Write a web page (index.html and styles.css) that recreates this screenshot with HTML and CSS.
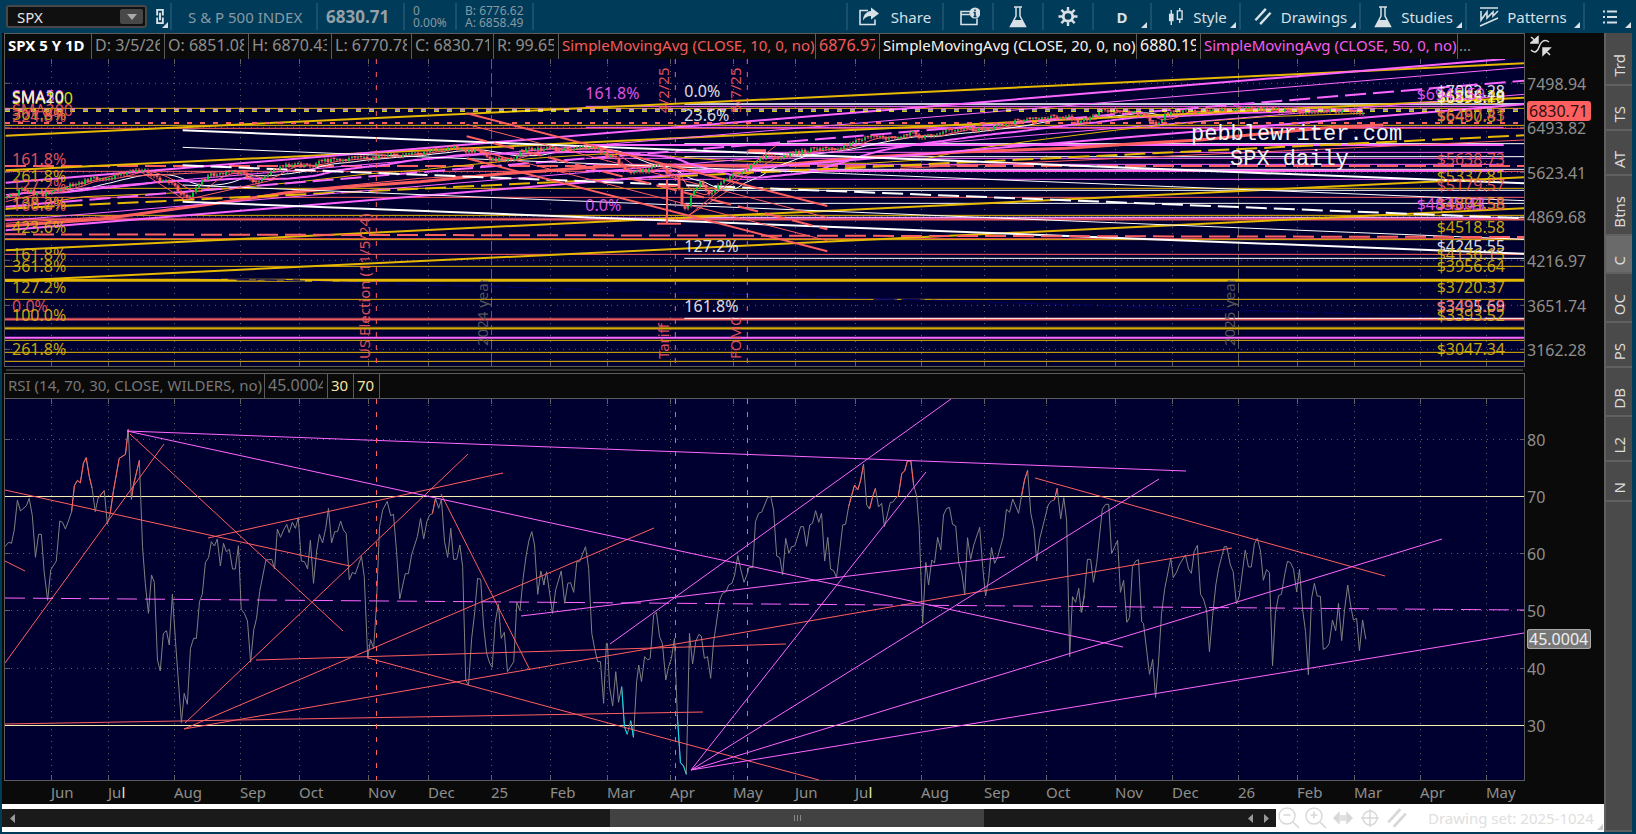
FILE: index.html
```
<!DOCTYPE html>
<html lang="en">
<head>
<meta charset="utf-8">
<title>SPX - Charts</title>
<link rel="stylesheet" href="styles.css">
</head>
<body>
<svg class="defs" aria-hidden="true">
  <symbol id="i-flask" viewBox="0 0 20 24"><path d="M6 2h8M8 2v9L2.500 21.500h15L12 11V2" fill="none" stroke="currentColor" stroke-width="1.500"/><path d="M6 15h8l4 7H2z" fill="currentColor"/></symbol>
  <symbol id="i-lines" viewBox="0 0 20 20"><path d="M2 14 13 2M7 18 18 6" fill="none" stroke="currentColor" stroke-width="2.500"/></symbol>
</svg>
<header class="toolbar">
  <div class="symbol">
    <div class="combo"><input aria-label="Symbol" value="SPX"><button aria-label="Symbol list"><svg viewBox="0 0 10 6"><path d="M0 0h10L5 6z" fill="#aaa"/></svg></button></div>
    <button class="link-btn corner" aria-label="Link"><svg viewBox="0 0 10 18"><path d="M2 8V2h6v6M2 10v6h6v-6M5 5v8" fill="none" stroke="#dce4ea" stroke-width="2"/></svg></button>
  </div>
  <div class="name">S &amp; P 500 INDEX</div>
  <div class="last">6830.71</div>
  <div class="small change">0<br>0.00%</div>
  <div class="small quote">B: 6776.62<br>A: 6858.49</div>
  <div class="spacer"></div>
  <button class="tool share"><svg viewBox="0 0 20 18"><path d="M9 3H1v14h15v-5" fill="none" stroke="currentColor" stroke-width="1.600"/><path d="M12 0l8 6-8 6V8.500C8 8.500 6 10 4 13c0-5 3-9 8-9.500z" fill="currentColor"/></svg>Share</button>
  <button class="tool info" aria-label="Chart info"><svg viewBox="0 0 20 18"><path d="M10 4H1v13h16v-6M1 7h9" fill="none" stroke="currentColor" stroke-width="1.600"/><circle cx="15" cy="5.500" r="5.500" fill="currentColor"/><path d="M13.500 5H15v4m-1.500 0h3M15 2v1.500" stroke="#003b59" stroke-width="1.500" fill="none"/></svg></button>
  <button class="tool lab" aria-label="Lab"><svg viewBox="0 0 20 24"><use href="#i-flask"/></svg></button>
  <button class="tool gear" aria-label="Settings"><svg viewBox="0 0 20 20"><circle cx="10" cy="10" r="5" fill="none" stroke="currentColor" stroke-width="3"/><path d="M10 0v4M10 16v4M0 10h4M16 10h4M3 3l3 3M14 14l3 3M17 3l-3 3M3 17l3-3" stroke="currentColor" stroke-width="2.500"/></svg></button>
  <button class="tool period corner"><b>D</b></button>
  <button class="tool style corner"><svg viewBox="0 0 16 20"><path d="M3.500 3v16M12.500 1v3M12.500 13v4" stroke="currentColor" stroke-width="1.500"/><path d="M1 7h5v8H1z" fill="currentColor"/><path d="M10 4h5v9h-5z" fill="none" stroke="currentColor" stroke-width="1.500"/></svg>Style</button>
  <button class="tool drawings corner"><svg viewBox="0 0 20 20"><use href="#i-lines"/></svg>Drawings</button>
  <button class="tool studies corner"><svg viewBox="0 0 20 24"><use href="#i-flask"/></svg>Studies</button>
  <button class="tool patterns corner"><svg viewBox="0 0 20 20"><path d="M1 1h18M1 19 19 11M2 4v9l6-8v6l6-6v4l5-5" fill="none" stroke="currentColor" stroke-width="1.600"/></svg>Patterns</button>
  <button class="tool menu corner" aria-label="Menu"><svg viewBox="0 0 14 14"><path d="M0 1.500h2M0 7h2M0 12.500h2M4 1.500h10M4 7h10M4 12.500h10" stroke="currentColor" stroke-width="2"/></svg></button>
</header>
<div class="workspace">
  <main class="charts">
    <div class="row head">
      <div class="cells">
        <div class="cell title">SPX 5 Y 1D</div>
        <div class="cell c-date"><span>D: 3/5/26</span></div>
        <div class="cell c-open"><span>O: 6851.08</span></div>
        <div class="cell c-high"><span>H: 6870.43</span></div>
        <div class="cell c-low"><span>L: 6770.78</span></div>
        <div class="cell c-close"><span>C: 6830.71</span></div>
        <div class="cell c-range"><span>R: 99.65</span></div>
        <div class="cell c-sma red">SimpleMovingAvg (CLOSE, 10, 0, no)</div>
        <div class="cell c-val red"><span>6876.97</span></div>
        <div class="cell c-sma white">SimpleMovingAvg (CLOSE, 20, 0, no)</div>
        <div class="cell c-val white"><span>6880.19</span></div>
        <div class="cell c-sma pink">SimpleMovingAvg (CLOSE, 50, 0, no)</div>
        <div class="cell c-rest">...</div>
      </div>
      <div class="corner-icon"><svg viewBox="0 0 22 22"><path d="M1 2l6 5M8 2v6H1zM1 15c4 4 7 1 8-3s5-9 10-5M20 20l-5-5M13 13v7l7-7z" fill="none" stroke="#ddd" stroke-width="1.500"/><path d="M8 1v7H1zM13 13h7l-7 7z" fill="#ddd"/></svg></div>
    </div>
    <div class="row price">
      <div class="plot" id="pricePlot"><svg viewBox="15 27 4557 921" preserveAspectRatio="none" id="priceSvg"></svg></div>
      <div class="axis" id="priceAxis"></div>
    </div>
    <div class="splitter"></div>
    <div class="row head rsi-head">
      <div class="cells">
        <div class="cell c-rsi">RSI (14, 70, 30, CLOSE, WILDERS, no)</div>
        <div class="cell c-rsival"><span>45.0004</span></div>
        <div class="cell c-lim">30</div>
        <div class="cell c-lim">70</div>
      </div>
      <div></div>
    </div>
    <div class="row rsi">
      <div class="plot" id="rsiPlot"><svg viewBox="5 399 1519 381" preserveAspectRatio="none" id="rsiSvg"></svg></div>
      <div class="axis" id="rsiAxis"></div>
    </div>
    <div class="row dates"><div class="date-axis" id="dateAxis"></div><div></div></div>
    <footer class="bottom">
      <div class="scroll">
        <button class="arrow" aria-label="Scroll left"><svg viewBox="0 0 5 9"><path d="M5 0v9L0 4.500z" fill="#999"/></svg></button>
        <div class="track"><div class="thumb"><i></i><i></i><i></i></div></div>
        <button class="arrow" aria-label="Step left"><svg viewBox="0 0 5 9"><path d="M5 0v9L0 4.500z" fill="#999"/></svg></button>
        <button class="arrow" aria-label="Step right"><svg viewBox="0 0 5 9"><path d="M0 0v9l5-4.500z" fill="#999"/></svg></button>
      </div>
      <div class="zoom-tools">
        <button aria-label="Zoom out"><svg viewBox="0 0 22 22"><circle cx="9" cy="9" r="8"/><path d="M5.500 8h7M15 15l6 6"/></svg></button>
        <button aria-label="Zoom in"><svg viewBox="0 0 22 22"><circle cx="9" cy="9" r="8"/><path d="M5.500 8h7M9 4.500v7M15 15l6 6"/></svg></button>
        <button aria-label="Fit"><svg viewBox="0 0 22 22"><path d="M9 8v6M11 8v6M13 8v6"/><path d="M7 6v10L2 11zM15 6v10l5-5z" fill="#d8d8d8"/></svg></button>
        <button aria-label="Crosshair"><svg viewBox="0 0 22 22"><circle cx="11" cy="11" r="7"/><path d="M11 2v18M2 11h18"/></svg></button>
        <button aria-label="Drawing tool"><svg viewBox="0 0 20 20"><use href="#i-lines"/></svg></button>
      </div>
      <button class="set corner">Drawing set: 2025-1024</button>
    </footer>
  </main>
  <nav class="tabs">
    <button class="t52"><span>Trd</span></button><button class="t45"><span>TS</span></button><button class="t45"><span>AT</span></button><button class="t60"><span>Btns</span></button><button class="t38 on"><span>C</span></button><button class="t49"><span>OC</span></button><button class="t45"><span>PS</span></button><button class="t49"><span>DB</span></button><button class="t45"><span>L2</span></button><button class="t40"><span>N</span></button>
  </nav>
</div>
<script src="charts.js"></script>
</body>
</html>
```
FILE: styles.css
```
* { box-sizing: border-box; }
body {
  margin: 0; height: 100vh; min-height: 600px; display: flex; flex-direction: column;
  background: #003b59; color: #8e8e8e; font: 16px/20px "Noto Sans", sans-serif; overflow: hidden;
}
button, input { font: inherit; color: inherit; background: none; border: 0; padding: 0; margin: 0; }
.defs { position: absolute; width: 0; height: 0; }
.toolbar { flex: none; height: 33px; padding: 3px 2px 3px 6px; display: flex; color: #d8e0e6; white-space: nowrap; }
.toolbar > * { border-right: 2px solid #1a4f6d; display: flex; align-items: center; }
.toolbar > .menu { border-right: 0; }
.symbol { width: 166px; gap: 8px; }
.combo { width: 141px; height: 23px; display: flex; align-items: center; background: #101010; border: 2px solid #484848; border-radius: 3px; padding-right: 2px; }
.combo input { flex: 1; min-width: 0; padding-left: 9px; color: #e4e4e4; font-size: 15px; }
.combo button { width: 23px; height: 15px; background: #484848; border-radius: 2px; display: grid; place-items: center; }
.combo svg { width: 10px; height: 6px; }
.link-btn { width: 13px; height: 100%; display: flex; align-items: center; }
.link-btn svg { width: 10px; height: 17px; }
.corner { position: relative; }
.corner::after { content: ""; position: absolute; right: 3px; bottom: 2px; border: 3px solid transparent; border-right-color: #d8e0e6; border-bottom-color: #d8e0e6; }
.link-btn.corner::after { right: 0; }
.name { width: 146px; padding-left: 16px; color: #8799a4; font-size: 15px; }
.last { width: 87px; padding-left: 8px; font-weight: bold; font-size: 17px; color: #96a0a7; }
.toolbar > .small { font-size: 12px; line-height: 12px; color: #8799a4; padding-left: 8px; }
.change { width: 52px; }
.quote { width: 77px; }
.toolbar > .spacer { flex: 1; }
.tool { justify-content: center; gap: 8px; font-size: 15px; }
.tool svg { width: 20px; height: 19px; }
.share { width: 96px; gap: 12px; }
.info { width: 50px; }
.info svg { margin-left: 4px; }
.lab { width: 50px; }
.gear { width: 50px; }
.period { width: 58px; }
.style { width: 89px; padding-left: 4px; gap: 10px; }
.style svg { width: 15px; }
.drawings { width: 120px; }
.studies { width: 106px; }
.lab svg, .studies svg { height: 24px; }
.patterns { width: 118px; padding-right: 4px; }
.patterns svg { height: 20px; }
.menu { width: 49px; }
.menu svg { width: 14px; height: 14px; }

.workspace { flex: 1; min-height: 0; display: flex; padding: 0 4px 2px 2px; }
.charts { flex: 1; min-width: 0; display: flex; flex-direction: column; background: #0a0a0a; }
.row { display: grid; grid-template-columns: minmax(0, 1fr) 79px; padding-left: 2px; }
.head { flex: none; height: 26px; }
.cells { display: flex; border: 1px solid #5c5c5c; overflow: hidden; white-space: nowrap; font-size: 15px; }
.cell { flex: none; border-right: 1px solid #5c5c5c; padding: 0 4px 0 3px; line-height: 22px; overflow: hidden; }
.cell span { display: block; overflow: hidden; font-size: 16px; }
.title { width: 87px; font-weight: bold; color: #fff; }
.c-date { width: 73px; }
.c-open { width: 84px; }
.c-high { width: 83px; }
.c-low { width: 80px; }
.c-close { width: 82px; }
.c-range { width: 65px; }
.c-sma { width: 257px; padding-right: 0; }
.c-val { width: 64px; }
.c-rest { border: 0; padding-left: 1px; }
.c-rsi { width: 260px; color: #777; }
.c-rsival { width: 63px; color: #777; }
.c-lim { width: 26px; color: #f5e6a0; }
.red { color: #f45a5d; }
.white { color: #f4f4f4; }
.pink { color: #f45cf0; }
.yellow { color: #dcb60a; }
.lemon { color: #f0f000; }
.gray { color: #5f5f5f; }
.corner-icon { padding: 2px 0 0 5px; }
.corner-icon svg { width: 22px; height: 22px; }
.price { flex: 308; min-height: 0; }
.rsi { flex: 382; min-height: 0; }
.plot { position: relative; background: #000030; border: solid #5c5c5c; border-width: 0 1px 1px; overflow: hidden; }
.plot svg { position: absolute; width: 100%; height: 100%; display: block; }
.plot path { fill: none; vector-effect: non-scaling-stroke; }
.label { position: absolute; line-height: 18px; font-size: 16px; white-space: nowrap; transform: translateY(-50%); opacity: .9; }
.label.end { transform: translate(-100%, -50%); }
.label.up { writing-mode: vertical-rl; transform: translate(-50%, -100%) rotate(180deg); font-size: 15px; }
.label.up.gray { max-height: 66px; overflow: hidden; }
.label.mono { font: 22px/22px "Liberation Mono", monospace; opacity: 1; }
.axis { position: relative; border-bottom: 1px solid transparent; }
.axis span { position: absolute; left: 2px; transform: translateY(-50%); line-height: 20px; }
.axis .mark { border-radius: 3px; background: #ff5f5f; color: #301010; padding: 0 3px 0 2px; }
.axis .mark.rsi-mark { background: #777; color: #eee; box-shadow: inset 0 0 0 1px #aaa; }
.splitter { flex: none; height: 6px; padding: 2px 81px 0 4px; }
.splitter::before { content: ""; display: block; height: 2px; background: #333; }
.dates { flex: none; height: 23px; }
.date-axis { position: relative; }
.date-axis span { position: absolute; top: 0; font-size: 15px; line-height: 22px; }
.date-axis b { font-weight: normal; color: #f2f0b0; }
.bottom { flex: none; height: 28px; background: #fff; display: flex; align-items: center; gap: 2px; color: #d8d8d8; }
.scroll { flex: 1; height: 18px; background: #1a1a1a; display: flex; align-items: center; padding: 0 2px; }
.arrow { width: 16px; height: 18px; display: grid; place-items: center; }
.arrow svg { width: 5px; height: 9px; }
.track { flex: 1; height: 18px; margin-right: 2px; }
.thumb { width: 30.6%; height: 18px; margin-left: 48.4%; background: #424242; display: flex; justify-content: center; align-items: center; gap: 2px; }
.thumb i { width: 1px; height: 6px; background: #888; }
.zoom-tools { display: flex; gap: 5px; }
.zoom-tools button { width: 22px; height: 22px; }
.zoom-tools svg { width: 22px; height: 22px; fill: none; stroke: #d8d8d8; stroke-width: 1.5; }
.set { font-size: 15px; width: 194px; text-align: left; padding-left: 18px; height: 24px; color: #e0e0e0; white-space: nowrap; }
.set.corner::after { right: 1px; bottom: 0; border-right-color: #ccc; border-bottom-color: #ccc; }
.tabs { flex: none; width: 28px; background: #4a4a4a; border-left: 2px solid #606060; display: flex; flex-direction: column; border-bottom: 2px solid #606060; }
.tabs button { flex: none; border-bottom: 2px solid #606060; color: #dcdcdc; display: grid; place-items: center; font-size: 15px; padding-top: 14px; }
.tabs span { writing-mode: vertical-rl; transform: rotate(180deg); }
.tabs .on { background: #6a6a6a; }
.t52 { height: 53px; }
.t45 { height: 45px; }
.t60 { height: 60px; }
.t38 { height: 38px; }
.t49 { height: 49px; }
.t40 { height: 40px; }
```
FILE: charts.js
```
const NS = 'http://www.w3.org/2000/svg';
const C = { y: '#e6b800', r: '#ff5f5f', p: '#ff66ff', w: '#ffffff', l: '#ffff00', g: '#606060', n: '#000068', dr: '#9c3f4c', dy: '#8a7010' };
const priceSvg = document.getElementById('priceSvg');
const rsiSvg = document.getElementById('rsiSvg');

function path(svg, d, color, width, dash, transform) {
  const el = document.createElementNS(NS, 'path');
  el.setAttribute('d', d);
  el.setAttribute('stroke', C[color] || color);
  el.setAttribute('stroke-width', width || 1);
  if (dash) el.setAttribute('stroke-dasharray', dash);
  if (transform) el.setAttribute('transform', transform);
  svg.appendChild(el);
}
const seg = (svg, x1, y1, x2, y2, c, w, dash) => path(svg, `M${x1} ${y1}L${x2} ${y2}`, c, w, dash);

/* ---- grid ---- */
const months = [[51, 'Jun'], [108, 'Jul'], [174, 'Aug'], [240, 'Sep'], [299, 'Oct'], [368, 'Nov'], [428, 'Dec'], [491, '25'], [550, 'Feb'], [607, 'Mar'], [670, 'Apr'], [733, 'May'], [795, 'Jun'], [855, 'Jul'], [921, 'Aug'], [984, 'Sep'], [1046, 'Oct'], [1115, 'Nov'], [1172, 'Dec'], [1238, '26'], [1297, 'Feb'], [1354, 'Mar'], [1420, 'Apr'], [1486, 'May']];
for (const [x] of months) {
  const px = (x + 0.5) * 3;
  const year = x === 491 || x === 1238;
  seg(priceSvg, px, 27, px, 948, 'g', 1, year ? '10 4' : '1 5');
  seg(priceSvg, px, 27, px, 42, 'g', 1);
  seg(priceSvg, px, 933, px, 948, 'g', 1);
  seg(rsiSvg, x + 0.5, 399, x + 0.5, 780, 'g', 1, '1 5');
  seg(rsiSvg, x + 0.5, 399, x + 0.5, 404, 'g', 1);
  seg(rsiSvg, x + 0.5, 775, x + 0.5, 780, 'g', 1);
}
for (const y of [100, 232, 367, 499, 631, 766, 898]) {
  seg(priceSvg, 15, y, 4572, y, 'g', 1, '1 5');
  seg(priceSvg, 15, y, 30, y, 'g', 1);
  seg(priceSvg, 4560, y, 4572, y, 'g', 1);
}
for (const y of [439.5, 553.5, 610.5, 668.5]) {
  seg(rsiSvg, 5, y, 1524, y, 'g', 1, '1 5');
  seg(rsiSvg, 5, y, 10, y, 'g', 1);
  seg(rsiSvg, 1520, y, 1524, y, 'g', 1);
}

/* ---- price series ---- */
const close = [[17,440],[50,430],[60,412],[110,432],[150,432],[190,412],[240,400],[270,388],[340,382],[400,362],[430,360],[450,375],[480,390],[520,400],[545,440],[570,440],[600,400],[630,375],[700,365],[735,375],[755,400],[790,385],[830,355],[880,342],[930,350],[980,330],[1040,328],[1090,320],[1110,325],[1140,318],[1180,312],[1210,318],[1260,310],[1310,300],[1360,292],[1400,305],[1430,300],[1470,325],[1530,332],[1580,295],[1630,298],[1680,300],[1720,297],[1780,292],[1810,310],[1850,330],[1890,375],[1940,360],[1980,345],[2000,365],[2030,385],[2045,460],[2060,480],[2080,420],[2100,400],[2130,440],[2160,395],[2190,380],[2220,370],[2270,330],[2310,310],[2340,325],[2380,310],[2440,300],[2500,300],[2550,280],[2600,265],[2680,262],[2740,250],[2770,265],[2820,248],[2880,238],[2950,240],[3000,228],[3040,215],[3080,205],[3130,205],[3200,198],[3230,215],[3280,200],[3310,182],[3360,185],[3400,190],[3440,205],[3470,222],[3500,190],[3560,185],[3660,182],[3720,180],[3800,178],[3900,185],[3980,182],[4040,182],[4080,190],[4095,185]];
const bars = [];
for (let x = 21, k = 0, seed = 7; x < 4095; x += 9) {
  while (close[k + 1][0] < x) k++;
  const [x0, y0] = close[k], [x1, y1] = close[k + 1];
  seed = (seed * 1103515245 + 12345) % 2147483648;
  bars.push({ x: Math.round(x / 3) * 3, y: y0 + (y1 - y0) * (x - x0) / (x1 - x0) + (seed / 2147483648 - 0.5) * 12 });
}
const average = n => 'M' + bars.map((b, i) => {
  const part = bars.slice(Math.max(0, i - n), i + 1);
  return b.x + ' ' + (part.reduce((s, p) => s + p.y, 0) / part.length).toFixed(1);
}).join('L');

function drawBars() {
  let up = '', down = '', wick = '';
  bars.forEach((b, i) => {
    const prev = i ? bars[i - 1].y : b.y + 4;
    const body = `M${b.x} ${prev}V${Math.abs(prev - b.y) < 4 ? prev - 4 : b.y}`;
    if (b.y < prev) up += body; else down += body;
    wick += `M${b.x} ${Math.min(prev, b.y) - 5}V${Math.max(prev, b.y) + 5}`;
  });
  path(priceSvg, wick, 'r', 1);
  path(priceSvg, down, 'r', 3);
  path(priceSvg, up, '#00c83c', 2);
}

/* ---- horizontal levels ---- */
const L = 15, R = 4572;
seg(priceSvg, L, 508, R, 508, 'dr', 3);
seg(priceSvg, L, 808, R, 808, 'dr', 3);
seg(priceSvg, L, 835, R, 835, 'dy', 3);
for (const [y, c, w, dash] of [[175,'y'],[226,'y'],[235,'r'],[364,'r'],[415,'y'],[442,'r'],[496,'y'],[508,'r'],[566,'r'],[569,'y'],[613,'r'],[649,'y'],[691,'y',3],[748,'y'],[808,'r'],[835,'y'],[863,'p',2],[871,'y'],[907,'y'],[934,'y'],[348,'r',2,'21 7']]) seg(priceSvg, L, y, R, y, c, w, dash);
for (const y of [281, 320, 358, 421, 460, 502, 625, 805]) seg(priceSvg, 2053, y, R, y, 'w');
seg(priceSvg, 2053, 162, R, 162, '#c8c8dc', 2);
for (const [y, w] of [[169,1],[232,1],[285,2],[307,1],[325,1],[343,1],[362,2],[388,1],[504,1]]) seg(priceSvg, 1757, y, 4511, y, 'p', w);

/* ---- averages and trend lines ---- */
path(priceSvg, 'M17 478L250 440L500 430L700 415L900 395L1100 372L1260 360L1400 345L1600 325L1800 312L2000 318L2150 330L2350 338L2600 340L2760 330L2900 300L3100 272L3350 240L3600 215L3800 200L4095 190', 'y');
path(priceSvg, 'M17 528L300 508L650 460L850 430L1050 410L1260 395L1500 372L1800 350L2000 345L2300 350L2400 340L2600 322L2900 305L3200 295L3450 278L3600 270L3800 250L4000 232L4150 225', 'r', 3);
path(priceSvg, 'M17 520L400 494L900 420L1260 385L1700 362', 'r', 1);
path(priceSvg, average(18), 'w', 1);
path(priceSvg, average(46), 'p', 2);
path(priceSvg, average(8), 'r', 1);
const trends = [
  [17,257,R,40,'y',2],[17,361,R,143,'y',2],[17,476,R,256,'y',2,'21 7'],[17,601,R,382,'y',2],[17,693,R,475,'y',2],
  [17,398,4515,27,'p',2],[17,434,R,52,'p',1],[17,470,R,92,'p',2,'21 7'],[17,512,R,133,'p',1],[17,541,R,163,'p',2],
  [548,241,R,400,'w',2],[548,292,R,452,'w',1],[548,346,R,505,'w',2,'21 7'],[548,405,R,568,'w',1],[548,455,R,611,'w',2],
  [15,553,R,561,'r',2,'21 7'],[2700,355,R,270,'r',1],
  [1400,190,2482,468,'r',2],[1400,223,2482,503,'r',1],[1400,259,2482,538,'r',2,'21 7'],[1400,293,2482,572,'r',1],[1400,325,2482,604,'r',2],
  [2065,497,2330,285,'r',1],[2065,497,2180,425,'r',1],[430,370,555,450,'r',1],[555,450,840,385,'r',1],[17,455,370,370,'r',1],[370,380,760,360,'r',1],
  [2001,390,2001,521,'r',2],[1971,521,2043,521,'r',2],[1971,408,2030,408,'r',2],[2245,302,2298,302,'r',3],
  [600,684,2460,740,'n',1,'21 7'],[2460,740,4460,804,'n',1,'21 7'],[2620,748,2760,748,'n',1,'21 7'],[710,690,900,690,'n',1,'21 7']
];
trends.forEach(t => seg(priceSvg, ...t));
drawBars();
seg(priceSvg, L, 219, R, 219, 'r', 2, '5 8');
seg(priceSvg, L, 177, R, 177, 'p', 1, '5 8');
seg(priceSvg, L, 180, R, 180, 'w', 1, '5 8');
seg(priceSvg, L, 184, R, 184, 'l', 1, '5 8');
for (const x of [1129, 2026, 2242]) seg(priceSvg, x, 27, x, 948, 'r', 1, '5 8');

/* ---- labels on the price plot ---- */
const pricePlot = document.getElementById('pricePlot');
function label(text, x, y, cls) {
  const el = document.createElement('span');
  el.className = 'label ' + cls;
  el.textContent = text;
  el.style.left = (x - 15) / 45.57 + '%';
  el.style.top = (y - 30) / 9.21 + '%';
  pricePlot.appendChild(el);
}
[['SMA50',140,'pink'],['SMA100',148,'lemon'],['SMA20',145,'white'],['361.8%',196,'yellow'],['SMA200',182,'red'],['224.8%',200,'red'],['161.8%',330,'red'],['261.8%',382,'yellow'],['127.2%',408,'red'],['138.2%',463,'yellow'],['100.0%',467,'red'],['423.6%',534,'yellow'],['161.8%',616,'yellow'],['361.8%',650,'yellow'],['127.2%',714,'yellow'],['0.0%',770,'red'],['100.0%',797,'yellow'],['261.8%',900,'yellow']].forEach(([t, y, c]) => label(t, 36, y, c));
[['$6925.20',147,'yellow'],['$6882.28',142,'lemon'],['$7002.28',125,'white'],['$6895.19',145,'white'],['$6490.81',202,'yellow'],['$6487.43',198,'red'],['$5638.73',330,'red'],['$5337.81',380,'yellow'],['$5179.57',408,'red'],['$4894.58',461,'yellow'],['$4803.58',466,'red'],['$4518.58',534,'yellow'],['$4245.55',590,'white'],['$4136.15',616,'yellow'],['$3956.64',650,'yellow'],['$3720.37',714,'yellow'],['$3495.69',770,'white'],['$3491.58',770,'red'],['$3393.52',797,'yellow'],['$3047.34',900,'yellow']].forEach(([t, y, c]) => label(t, 4515, y, 'end ' + c));
label('$6945.59', 4250, 134, 'pink');
label('$4835.43', 4250, 466, 'pink');
label('161.8%', 1756, 133, 'pink');
label('0.0%', 1756, 467, 'pink');
[['0.0%',125],['23.6%',197],['127.2%',590],['161.8%',770]].forEach(([t, y]) => label(t, 2053, y, 'white'));
[['US Election (11/5/24)',1092,930,'red'],['2024 year',1446,890,'gray'],['4/2/25',1989,192,'red'],['Tariff',1989,930,'red'],['5/7/25',2205,192,'red'],['FOMC',2205,930,'red'],['2025 year',3687,890,'gray']].forEach(([t, x, y, c]) => label(t, x, y, 'up ' + c));
label('pebblewriter.com', 3573, 258, 'mono white');
label('SPX daily', 3690, 333, 'mono white');

/* ---- RSI plot ---- */
seg(rsiSvg, 5, 496.5, 1524, 496.5, '#f5f0b0');
seg(rsiSvg, 5, 725.5, 1524, 725.5, '#f5f0b0');
const part = [['translate(0 365) scale(.34758 .33333)', '14,545 25,532 33,535 41,495 50,406 59,438 76,422 84,400 93,452 102,577 111,508 119,508 127,620 137,706 146,615 162,588 172,468 180,472 188,492 197,468 206,440 214,362 223,346 231,354 240,295 248,278 257,335 265,370 274,440 282,400 291,388 300,377 309,478 317,445 326,380 343,280 361,268 369,193 378,403 384,360 401,286 410,545 418,655 427,745 436,630 444,652 453,885 461,918 470,805 479,797 487,840 496,688 505,830 522,1073 530,985 539,1018 548,850 557,820 565,820 574,710 582,688 591,592 600,578 608,530 617,543 625,522 634,603 643,535 651,560 660,553 669,612 677,612 686,542 694,733 703,745 712,768 721,892 730,795 738,760 747,680 765,585 782,583 790,612 798,492 807,517 816,495 825,478 832,503 841,472 850,490 858,458 867,588 876,590 885,612 893,526 902,655 911,558 919,508 928,534 937,490 945,430 954,534 963,500 971,500 980,468 988,495 996,505 1005,645 1014,622 1022,627 1040,574 1048,635 1058,880 1066,824 1075,850 1083,720 1092,485 1101,435 1114,409 1124,452 1132,448 1141,560 1150,702 1166,626 1175,626 1184,570 1201,514 1210,460 1219,522 1228,470 1236,450 1244,446 1253,400 1262,430 1270,403 1279,530 1288,577 1297,490 1305,583 1314,583 1323,540 1331,605 1340,945 1348,960 1357,820 1366,740 1374,640 1383,643 1391,780 1400,865 1409,895 1416,907 1425,770 1434,718 1442,820 1451,802 1460,920 1478,890 1487,712 1496,737 1505,640 1514,570 1522,525 1530,500 1538,540 1547,688 1556,618 1565,660 1567,640'],
  ['translate(540 365) scale(.34758 .33333)', '10,660 19,620 36,745 45,675 61,618 71,715 80,655 88,653 97,682 106,590 114,590 131,545 140,610 149,805 157,850 166,890 174,890 183,1015 191,835 194,835 200,965 209,1023 218,920 226,1012 235,965 243,1085 251,1108 261,1067 269,1117 278,950 284,900 292,950 301,875 310,885 317,880 327,750 335,742 344,815 352,835 362,945 370,905 378,880 387,820 395,1050 404,1193 413,1203 421,1228 430,805 439,897 448,830 457,808 464,813 473,880 482,875 491,940 499,835 517,705 525,685 535,680 543,660 552,655 560,630 569,572 578,615 587,652 597,625 601,607 612,608 620,470 629,445 638,441 655,397 664,395 672,435 681,573 690,578 698,630 707,520 716,565 724,545 733,543 750,485 758,485 767,544 776,480 784,475 793,437 802,472 810,445 819,588 828,517 836,612 845,617 853,638 862,560 871,480 879,478 888,425 897,390 905,360 914,375 922,348 931,298 940,420 948,432 957,395 965,370 974,426 983,415 991,485 1008,412 1015,412 1024,398 1031,393 1041,325 1049,318 1057,288 1067,288 1075,360 1084,395 1091,490 1101,775 1110,592 1118,660 1127,585 1135,594 1144,517 1153,555 1161,450 1170,430 1178,427 1187,478 1196,483 1205,595 1213,620 1222,690 1230,518 1239,583 1248,540 1265,487 1274,610 1282,693 1291,640 1299,548 1308,595 1317,575 1333,515 1342,433 1351,442 1360,402 1377,445 1385,395 1394,345 1403,316 1412,445 1421,490 1429,588 1438,520 1462,420 1471,408 1480,405 1488,370 1498,462 1507,398 1515,465 1524,875 1532,695 1541,712 1550,670 1557,742 1567,690'],
  ['translate(1080 365) scale(.35461 .33333)', '5,742 13,680 21,583 30,583 38,652 47,595 63,432 72,418 81,418 89,566 106,526 114,682 123,646 132,772 140,757 148,605 157,588 165,584 174,770 179,775 196,928 205,883 213,998 221,900 230,745 239,670 256,580 263,638 272,622 280,600 297,570 306,612 314,625 322,560 331,541 340,688 348,702 357,735 365,860 374,752 383,660 391,610 407,545 414,545 424,600 432,620 441,717 449,695 466,555 475,606 483,606 492,535 500,520 509,558 517,646 526,614 534,622 543,902 551,745 560,692 568,688 577,630 585,589 593,592 602,612 611,680 619,613 628,735 636,800 644,930 653,700 661,655 669,693 678,694 686,853 695,848 703,835 712,765 721,798 729,715 738,827 746,735 755,660 763,720 771,765 780,760 788,857 797,765 806,823']];
part.forEach(([t, pts]) => path(rsiSvg, 'M' + pts.replace(/ /g, 'L'), '#808080', 1, null, t));
path(rsiSvg, 'M206 440L214 362L223 346L231 354L240 295L248 278L257 335L265 370M282 400L291 388L300 377M317 445L326 380L343 280L361 268L369 193M378 403L384 360L401 286M1244 446L1253 400', 'r', 1, null, part[0][0]);
path(rsiSvg, 'M888 425L897 390L905 360L914 375L922 348L931 298M948 432L957 395L965 370M1024 398L1031 393L1041 325L1049 318L1057 288L1067 288L1075 360M1385 395L1394 345L1403 316M1480 405L1488 370', 'r', 1, null, part[1][0]);
path(rsiSvg, 'M235 965L243 1085L251 1108M261 1067L269 1117M395 1050L404 1193L413 1203L421 1228', '#00e0f0', 1, null, part[1][0]);
[[5,490,350,566,'r'],[5,561,25,571,'r'],[5,663,164,444,'r'],[130,434,343,631,'r'],[208,538,503,473,'r'],[185,723,468,454,'r'],[184,729,654,528,'r'],[184,729,1232,548,'r'],[256,660,786,644,'r'],[368,658,819,780,'r'],[5,724,703,712,'r'],[441,494,530,670,'r'],[1035,478,1385,576,'r'],
 [127,431,1186,471,'p'],[127,431,1123,647,'p'],[5,598,1524,610,'p',1,'20 8'],[521,616,1005,557,'p'],[610,644,951,399,'p'],[691,770,926,472,'p'],[691,770,1159,479,'p'],[691,770,1442,539,'p'],[691,770,1524,633,'p'],
 [376.5,399,376.5,780,'r',1,'5 8'],[675.5,399,675.5,780,'r',1,'5 8'],[747.5,399,747.5,780,'r',1,'5 8']].forEach(t => seg(rsiSvg, ...t));

/* ---- axes ---- */
function tick(axis, text, pct, cls) {
  const el = document.createElement('span');
  el.textContent = text;
  el.style.top = pct + '%';
  if (cls) el.className = cls;
  axis.appendChild(el);
}
const priceAxis = document.getElementById('priceAxis');
[['7498.94',104],['6493.82',236],['5623.41',371],['4869.68',503],['4216.97',635],['3651.74',770],['3162.28',902]].forEach(([t, y]) => tick(priceAxis, t, (y - 30) / 9.21));
tick(priceAxis, '6830.71', (184 - 27) / 9.21, 'mark');
const rsiAxis = document.getElementById('rsiAxis');
[['80',440],['70',497],['60',554],['50',611],['40',669],['30',726]].forEach(([t, y]) => tick(rsiAxis, t, (y - 399) / 3.81));
tick(rsiAxis, '45.0004', (639 - 399) / 3.81, 'mark rsi-mark');
const dateAxis = document.getElementById('dateAxis');
for (const [x, m] of months) {
  const el = document.createElement('span');
  el.innerHTML = m === 'Jul' ? 'Ju<b>l</b>' : m;
  el.style.left = (x - 4) / 15.21 + '%';
  dateAxis.appendChild(el);
}
```
